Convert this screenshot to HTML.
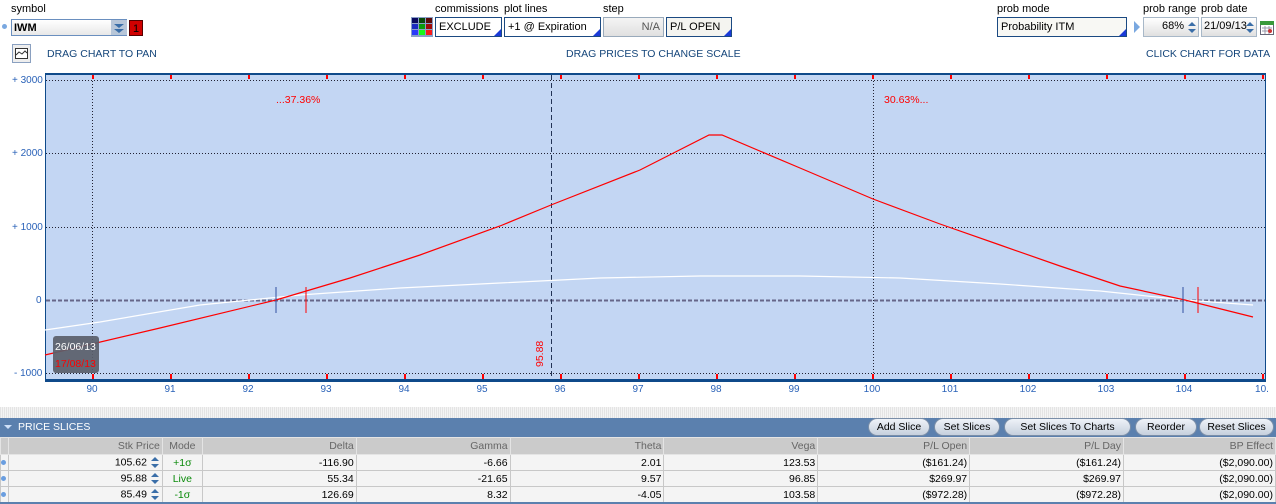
<!DOCTYPE html>
<html><head><meta charset="utf-8"><style>
*{margin:0;padding:0;box-sizing:border-box}
body{width:1276px;height:504px;background:#fff;font-family:"Liberation Sans",sans-serif;font-size:10.5px;color:#000;position:relative;overflow:hidden}
.a{position:absolute}
.lbl{font-size:11px;color:#000}
.box{position:absolute;border:1px solid #1b4a82;background:#fff;font-size:11px;padding:2px 3px;height:20px;line-height:15px}
.tri{position:absolute;right:0;bottom:0;width:0;height:0;border-left:7px solid transparent;border-bottom:7px solid #1a3ad8}
.blue{color:#14457a;font-size:10.5px}
.ax{color:#2a62b8;font-size:10px}
table{border-collapse:collapse;position:absolute;left:0;top:437px;width:1276px;font-size:10.5px}
td{border:1px solid #c8c8c8;height:16px;text-align:right;padding:0 2px;white-space:nowrap}
tr.h td{background:#cbcbcb;color:#666;border-color:#e4e4e4;height:17px}
tr.r td{background:#f4f4f4}
.g{color:#0a8a0a;text-align:center!important}
.btn{position:absolute;top:418px;height:18px;border-radius:9px;background:linear-gradient(#eef2f8,#c6d0dd);border:1px solid #7a8ea8;font-size:10.5px;line-height:16px;text-align:center;color:#000}
.spin{display:inline-block;width:10px;vertical-align:middle}
</style></head><body>
<div class="a lbl" style="left:11px;top:3px">symbol</div>
<div class="a" style="left:2px;top:24px;width:5px;height:5px;border-radius:50%;background:#7aa8e0"></div>
<div class="a" style="left:11px;top:19px;width:116px;height:17px;border:1px solid #6a8fbf;background:linear-gradient(#fff,#e8e8e8);font-weight:bold;font-size:11px;padding:2px 2px;line-height:12px">IWM</div>
<div class="a" style="left:111px;top:20px;width:16px;height:15px;background:#b7c6d8"><svg width="16" height="15"><path d="M3 4h10l-5 4z M3 9h10l-5 4z" fill="#3a6ea8"/></svg></div>
<svg class="a" style="left:129px;top:20px" width="14" height="16"><rect x="0.5" y="0.5" width="13" height="15" fill="#d00000" stroke="#500"/><text x="7" y="12" text-anchor="middle" font-size="11" font-family="Liberation Sans" fill="#000">1</text></svg>

<div class="a" style="left:411px;top:17px;width:22px;height:20px;background:#8aa0c8;padding:1px">
<svg width="20" height="18"><rect x="0" y="0" width="6" height="5" fill="#0a0a60"/><rect x="7" y="0" width="6" height="5" fill="#0a4a0a"/><rect x="14" y="0" width="6" height="5" fill="#5a0a0a"/><rect x="0" y="6" width="6" height="5" fill="#1a2ac0"/><rect x="7" y="6" width="6" height="5" fill="#0a9a0a"/><rect x="14" y="6" width="6" height="5" fill="#a00a0a"/><rect x="0" y="12" width="6" height="5" fill="#2a3af8"/><rect x="7" y="12" width="6" height="5" fill="#1af81a"/><rect x="14" y="12" width="6" height="5" fill="#f81a1a"/></svg></div>
<div class="a lbl" style="left:435px;top:3px">commissions</div>
<div class="box" style="left:435px;top:17px;width:67px">EXCLUDE<div class="tri"></div></div>
<div class="a lbl" style="left:504px;top:3px">plot lines</div>
<div class="box" style="left:504px;top:17px;width:97px">+1 @ Expiration<div class="tri"></div></div>
<div class="a lbl" style="left:603px;top:3px">step</div>
<div class="box" style="left:603px;top:17px;width:61px;border-color:#9ab;background:linear-gradient(#f4f4f4,#e0e0e0);text-align:right;color:#555">N/A</div>
<div class="box" style="left:666px;top:17px;width:66px;background:#f4f4f0">P/L OPEN<div class="tri"></div></div>

<div class="a lbl" style="left:997px;top:3px">prob mode</div>
<div class="box" style="left:997px;top:17px;width:130px;background:#f8f8f4">Probability ITM<div class="tri"></div></div>
<div class="a" style="left:1134px;top:21px;width:0;height:0;border-top:6px solid transparent;border-bottom:6px solid transparent;border-left:6px solid #7aa8e0"></div>
<div class="a lbl" style="left:1143px;top:3px">prob range</div>
<div class="a lbl" style="left:1201px;top:3px">prob date</div>
<div class="a" style="left:1143px;top:17px;width:56px;height:20px;border:1px solid #a8b8c8;background:linear-gradient(#fff,#e0e0e0);text-align:right;padding:2px 14px 0 0;font-size:11px">68%<svg class="a" style="right:1px;top:2px" width="10" height="15"><path d="M1 6l4-4 4 4zM1 9l4 4 4-4z" fill="#3a6ea8"/></svg></div>
<div class="a" style="left:1201px;top:17px;width:56px;height:20px;border:1px solid #a8b8c8;background:linear-gradient(#fff,#e0e0e0);padding:2px 0 0 2px;font-size:11px">21/09/13<svg class="a" style="right:1px;top:2px" width="10" height="15"><path d="M1 6l4-4 4 4zM1 9l4 4 4-4z" fill="#3a6ea8"/></svg></div>
<svg class="a" style="left:1260px;top:20px" width="15" height="16"><rect x="0.5" y="2.5" width="13" height="12" fill="#fff" stroke="#667"/><rect x="0" y="1" width="14" height="4" fill="#3a9a3a"/><path d="M2 8h10M2 11h10M5 6v8M9 6v8" stroke="#99a" stroke-width="1"/><circle cx="10" cy="11" r="2" fill="#c33"/></svg>

<div class="a" style="left:12px;top:44px;width:19px;height:19px;border:1px solid #8aa0c0;background:#eee"><svg width="17" height="17"><rect x="2.5" y="3.5" width="12" height="10" fill="#fff" stroke="#333"/><path d="M3 10l3-3 3 2 3-3 2 2" fill="none" stroke="#333"/></svg></div>
<div class="a blue" style="left:47px;top:48px">DRAG CHART TO PAN</div>
<div class="a blue" style="left:566px;top:48px">DRAG PRICES TO CHANGE SCALE</div>
<div class="a blue" style="left:1146px;top:48px">CLICK CHART FOR DATA</div>

<div class="a ax" style="left:12px;top:75px">+ 3000</div>
<div class="a ax" style="left:12px;top:148px">+ 2000</div>
<div class="a ax" style="left:12px;top:222px">+ 1000</div>
<div class="a ax" style="left:36px;top:295px">0</div>
<div class="a ax" style="left:14px;top:368px">- 1000</div>

<svg class="a" style="left:0;top:70px" width="1276" height="330">
<rect x="45" y="3" width="1221" height="309" fill="#c3d6f3"/>
<rect x="45" y="3" width="1221" height="2" fill="#0f4a8a"/>
<rect x="45" y="309" width="1221" height="3" fill="#0f4a8a"/>
<rect x="45" y="3" width="1" height="309" fill="#0f4a8a"/>
<rect x="1265" y="3" width="1" height="309" fill="#0f4a8a"/>
<g stroke="#223" stroke-width="1" stroke-dasharray="1,2">
<line x1="46" y1="10.5" x2="1265" y2="10.5"/><line x1="46" y1="83.5" x2="1265" y2="83.5"/><line x1="46" y1="157.5" x2="1265" y2="157.5"/><line x1="46" y1="303.5" x2="1265" y2="303.5"/>
<line x1="92.5" y1="5" x2="92.5" y2="309"/><line x1="873.5" y1="5" x2="873.5" y2="309"/>
</g>
<line x1="46" y1="230.5" x2="1265" y2="230.5" stroke="#666688" stroke-width="2" stroke-dasharray="4,2"/>
<line x1="551.5" y1="5" x2="551.5" y2="309" stroke="#223355" stroke-dasharray="5,3"/>
<g fill="#f00">
<rect x="92" y="5" width="2" height="4"/><rect x="170" y="5" width="2" height="4"/><rect x="248" y="5" width="2" height="4"/><rect x="326" y="5" width="2" height="4"/><rect x="404" y="5" width="2" height="4"/><rect x="482" y="5" width="2" height="4"/><rect x="560" y="5" width="2" height="4"/><rect x="638" y="5" width="2" height="4"/><rect x="716" y="5" width="2" height="4"/><rect x="794" y="5" width="2" height="4"/><rect x="872" y="5" width="2" height="4"/><rect x="950" y="5" width="2" height="4"/><rect x="1028" y="5" width="2" height="4"/><rect x="1106" y="5" width="2" height="4"/><rect x="1184" y="5" width="2" height="4"/><rect x="1262" y="5" width="2" height="4"/>
<rect x="92" y="304" width="2" height="5"/><rect x="170" y="304" width="2" height="5"/><rect x="248" y="304" width="2" height="5"/><rect x="326" y="304" width="2" height="5"/><rect x="404" y="304" width="2" height="5"/><rect x="482" y="304" width="2" height="5"/><rect x="560" y="304" width="2" height="5"/><rect x="638" y="304" width="2" height="5"/><rect x="716" y="304" width="2" height="5"/><rect x="794" y="304" width="2" height="5"/><rect x="872" y="304" width="2" height="5"/><rect x="950" y="304" width="2" height="5"/><rect x="1028" y="304" width="2" height="5"/><rect x="1106" y="304" width="2" height="5"/><rect x="1184" y="304" width="2" height="5"/><rect x="1262" y="304" width="2" height="5"/>
</g>
<polyline fill="none" stroke="#fff" stroke-width="1.2" points="45,260 100,252 200,235 300,225 400,218 500,213 600,208 700,206 800,206 900,208 1000,214 1100,221 1185,230 1253,235"/>
<polyline fill="none" stroke="#f00" stroke-width="1.2" points="45,285 160,258 276,230 350,208 420,185 500,156 551,135 640,100 709,65 722,65 800,98 873,129 940,154 1000,175 1060,196 1120,216 1185,230 1253,247"/>
<line x1="276" y1="217" x2="276" y2="243" stroke="#3050a0"/><line x1="306" y1="217" x2="306" y2="243" stroke="#f00"/>
<line x1="1183" y1="217" x2="1183" y2="243" stroke="#3050a0"/><line x1="1198" y1="217" x2="1198" y2="243" stroke="#f00"/>
<text x="276" y="33" fill="#f00" font-size="10.5" font-family="Liberation Sans">...37.36%</text>
<text x="884" y="33" fill="#f00" font-size="10.5" font-family="Liberation Sans">30.63%...</text>
<text transform="translate(543,297) rotate(-90)" fill="#f00" font-size="10.5" font-family="Liberation Sans">95.88</text>
<rect x="53" y="266" width="46" height="37" rx="3" fill="#5a5e6a" opacity="0.92"/>
<text x="55" y="280" fill="#fff" font-size="10.5" font-family="Liberation Sans">26/06/13</text>
<text x="55" y="297" fill="#f00" font-size="10.5" font-family="Liberation Sans">17/08/13</text>
<g fill="#2a62b8" font-size="10" font-family="Liberation Sans" text-anchor="middle">
<text x="92" y="322">90</text><text x="170" y="322">91</text><text x="248" y="322">92</text><text x="326" y="322">93</text><text x="404" y="322">94</text><text x="482" y="322">95</text><text x="560" y="322">96</text><text x="638" y="322">97</text><text x="716" y="322">98</text><text x="794" y="322">99</text><text x="872" y="322">100</text><text x="950" y="322">101</text><text x="1028" y="322">102</text><text x="1106" y="322">103</text><text x="1184" y="322">104</text><text x="1262" y="322">10.</text>
</g>
</svg>

<div class="a" style="left:0;top:407px;width:1276px;height:11px;background:repeating-linear-gradient(90deg,#e4e4e4 0 1px,#f4f4f4 1px 2px)"></div>
<div class="a" style="left:0;top:418px;width:1276px;height:19px;background:#5b80ae"></div>
<div class="a" style="left:4px;top:425px;width:0;height:0;border-left:4px solid transparent;border-right:4px solid transparent;border-top:4px solid #cfe0f8"></div>
<div class="a" style="left:18px;top:421px;color:#fff;font-size:10.5px">PRICE SLICES</div>
<div class="btn" style="left:868px;width:62px">Add Slice</div>
<div class="btn" style="left:934px;width:66px">Set Slices</div>
<div class="btn" style="left:1004px;width:127px">Set Slices To Charts</div>
<div class="btn" style="left:1135px;width:62px">Reorder</div>
<div class="btn" style="left:1199px;width:75px">Reset Slices</div>

<table>
<colgroup><col style="width:8px"><col style="width:154px"><col style="width:40px"><col style="width:154px"><col style="width:154px"><col style="width:154px"><col style="width:154px"><col style="width:152px"><col style="width:154px"><col style="width:152px"></colgroup>
<tr class="h"><td></td><td>Stk Price</td><td style="text-align:center">Mode</td><td>Delta</td><td>Gamma</td><td>Theta</td><td>Vega</td><td>P/L Open</td><td>P/L Day</td><td>BP Effect</td></tr>
<tr class="r"><td style="padding:0"><div style="width:5px;height:5px;border-radius:50%;background:#6a9ee0"></div></td><td>105.62 <svg class="spin" width="10" height="13"><path d="M1 5l4-4 4 4zM1 8l4 4 4-4z" fill="#3a6ea8"/></svg></td><td class="g">+1σ</td><td>-116.90</td><td>-6.66</td><td>2.01</td><td>123.53</td><td>($161.24)</td><td>($161.24)</td><td>($2,090.00)</td></tr>
<tr class="r"><td style="padding:0"><div style="width:5px;height:5px;border-radius:50%;background:#6a9ee0"></div></td><td>95.88 <svg class="spin" width="10" height="13"><path d="M1 5l4-4 4 4zM1 8l4 4 4-4z" fill="#3a6ea8"/></svg></td><td class="g">Live</td><td>55.34</td><td>-21.65</td><td>9.57</td><td>96.85</td><td>$269.97</td><td>$269.97</td><td>($2,090.00)</td></tr>
<tr class="r"><td style="padding:0"><div style="width:5px;height:5px;border-radius:50%;background:#6a9ee0"></div></td><td>85.49 <svg class="spin" width="10" height="13"><path d="M1 5l4-4 4 4zM1 8l4 4 4-4z" fill="#3a6ea8"/></svg></td><td class="g">-1σ</td><td>126.69</td><td>8.32</td><td>-4.05</td><td>103.58</td><td>($972.28)</td><td>($972.28)</td><td>($2,090.00)</td></tr>
</table>
<div class="a" style="left:0;top:502px;width:1276px;height:2px;background:#5b80ae"></div>
</body></html>
